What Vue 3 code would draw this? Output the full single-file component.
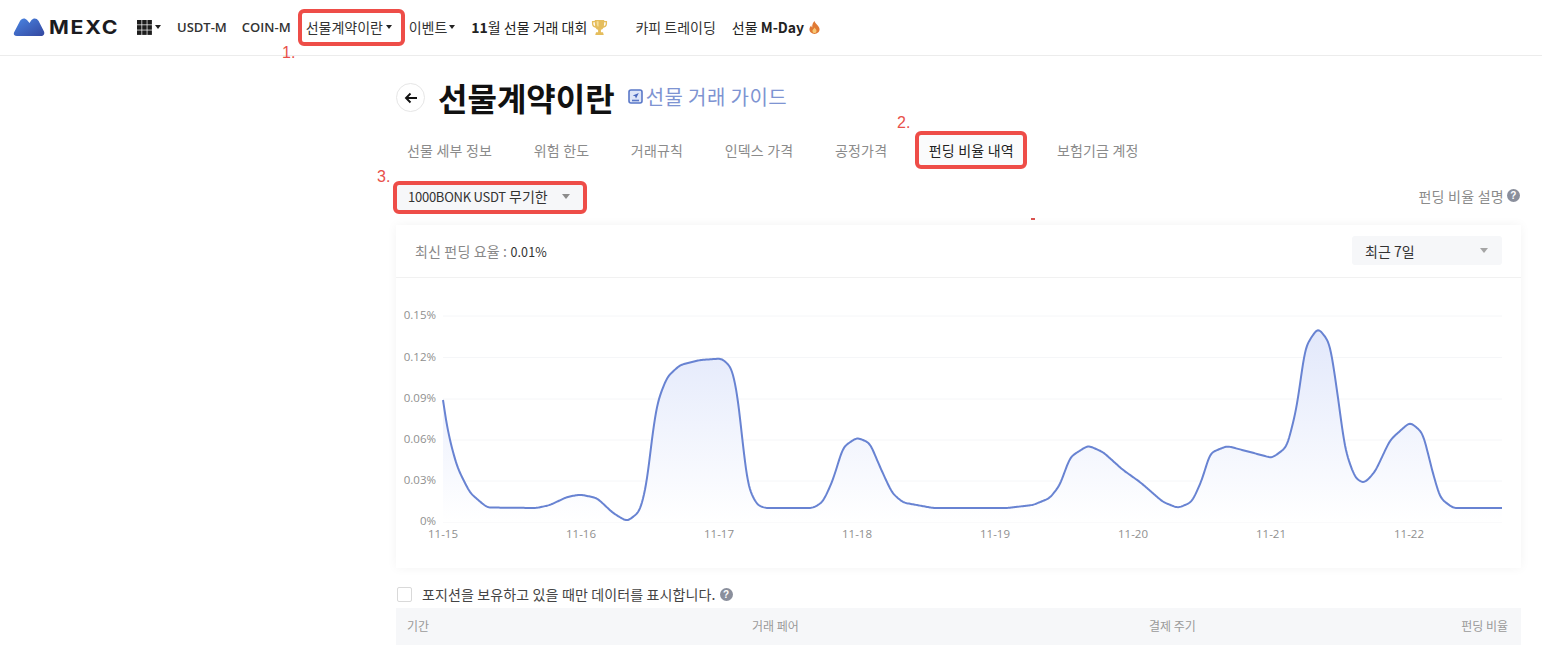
<template>
  <div class="page">
    <header class="topbar">
      <div class="logo">
        <svg class="logo-mark" viewBox="0 0 32 20" width="32" height="20">
          <defs>
            <linearGradient id="logoBlue" x1="0" y1="0" x2="1" y2="1">
              <stop offset="0" stop-color="#4a86e4" />
              <stop offset="1" stop-color="#34479f" />
            </linearGradient>
          </defs>
          <path fill="url(#logoBlue)" d="M1 15.500 7 4C8.500 1 12 .5 14 3L16.500 6 18.500 3C20.500 .5 24 1 25.500 3.800L31 14.500C32 17 30.500 19 28 19H4C1.500 19 .2 17.500 1 15.500Z" />
        </svg>
        <span class="logo-text">MEXC</span>
      </div>

      <div class="apps">
        <svg viewBox="0 0 15 15" width="15" height="15">
          <g fill="#1d1d1d">
            <template v-for="r in 3" :key="r">
              <rect v-for="c in 3" :key="c" :x="(c - 1) * 5.200" :y="(r - 1) * 5.200" width="4.500" height="4.500" />
            </template>
          </g>
        </svg>
        <i class="caret dark"></i>
      </div>

      <nav class="menu">
        <a class="menu-item latin">USDT-M</a>
        <a class="menu-item latin">COIN-M</a>
        <a class="menu-item boxed">선물계약이란<i class="caret dark"></i></a>
        <a class="menu-item after-box">이벤트<i class="caret dark"></i></a>
        <a class="menu-item contest"><b>11</b>월 선물 거래 대회
          <svg class="trophy" viewBox="0 0 18 18" width="17" height="17">
            <path fill="#e5bd5c" d="M4 1h10v1h3v3c0 2.400-1.500 3.900-3.800 4.200-.7 1.200-1.600 2-2.700 2.300V14h2.200l.8 3H4.500l.8-3h2.200v-2.500C6.400 11.200 5.500 10.400 4.800 9.200 2.500 8.900 1 7.400 1 5V2h3V1Zm-1.500 2.500V5c0 1.300.7 2.200 1.900 2.500C4.100 6.500 4 5.100 4 3.500H2.500Zm13 0H14c0 1.600-.1 3-.4 4 1.200-.3 1.900-1.200 1.900-2.500V3.500Z" />
            <path fill="#f6e09a" d="M6 2.500h2V8H7C6.300 7 6 5 6 2.500Z" />
          </svg>
        </a>
        <a class="menu-item copy">카피 트레이딩</a>
        <a class="menu-item contest">선물&nbsp;<b>M-Day</b>
          <svg class="flame" viewBox="0 0 12 14" width="11" height="13">
            <path fill="#e07a35" d="M6 0c.5 2.200 2 3 3.300 4.600C10.500 6 11.500 7.500 11.500 9c0 3-2.500 5-5.500 5S.5 12 .5 9c0-1.800.9-3.300 2-4.300 0 1.100.3 1.900 1 2.300C3.300 4.200 4.300 1.700 6 0Z" />
            <path fill="#f7c873" d="M6 7c.4 1.100 2.200 1.900 2.200 3.800C8.200 12.200 7.200 13 6 13s-2.200-.8-2.200-2.200C3.800 9.200 5.500 8.500 6 7Z" />
          </svg>
        </a>
        <span class="mark mark-one">1.</span>
      </nav>
    </header>

    <main class="content">
      <div class="title-row">
        <button class="back">
          <svg viewBox="0 0 14 14" width="14" height="14">
            <path d="M13 7H2M6.500 2.500 2 7l4.500 4.500" fill="none" stroke="#111" stroke-width="1.900" />
          </svg>
        </button>
        <h1 class="title">선물계약이란</h1>
        <a class="guide">
          <svg viewBox="0 0 15 15" width="15" height="15">
            <rect x="1" y="1" width="13" height="13" rx="2" fill="#dfe6f8" stroke="#5a78c8" stroke-width="1.600" />
            <path d="M4 11.500h7" stroke="#5a78c8" stroke-width="1.600" />
            <path d="M10.800 4 4.800 6.500l2.300.8.900 2.200 2.800-5.500Z" fill="#4a68bd" />
          </svg>
          선물 거래 가이드
        </a>
      </div>

      <div class="tabs">
        <a v-for="tab in tabs" :key="tab.label" class="tab" :class="{ active: tab.active }">{{ tab.label }}</a>
        <span class="mark mark-two">2.</span>
      </div>

      <div class="filter-row">
        <div class="symbol-select">
          <span><span class="pair">1000BONK USDT</span> 무기한</span>
          <i class="caret grey"></i>
        </div>
        <span class="mark mark-three">3.</span>
        <a class="explain">펀딩 비율 설명<span class="help">?</span></a>
        <i class="stray"></i>
      </div>

      <section class="card">
        <div class="card-head">
          <p class="latest">최신 펀딩 요율 : <b>0.01%</b></p>
          <div class="range-select">
            <span>최근 7일</span>
            <i class="caret grey small"></i>
          </div>
        </div>

        <svg class="chart" viewBox="396 278 1125 290" width="1125" height="290">
          <defs>
            <linearGradient id="areaFill" x1="0" y1="0" x2="0" y2="1">
              <stop offset="0" stop-color="#e2e8fb" />
              <stop offset="1" stop-color="#ffffff" />
            </linearGradient>
          </defs>
          <line v-for="g in grid" :key="g.label" x1="443" x2="1502" :y1="g.y" :y2="g.y" class="grid-line" />
          <text v-for="g in grid" :key="g.label + 't'" x="436" :y="g.y + 3" text-anchor="end" class="axis">{{ g.label }}</text>
          <text v-for="d in days" :key="d.label" :x="d.x" y="538" text-anchor="middle" class="axis">{{ d.label }}</text>
          <path :d="areaPath" fill="url(#areaFill)" />
          <path :d="linePath" fill="none" stroke="#6883d2" stroke-width="2" />
        </svg>
      </section>

      <label class="position-only">
        <span class="checkbox"></span>
        포지션을 보유하고 있을 때만 데이터를 표시합니다.
        <span class="help">?</span>
      </label>

      <div class="table-head">
        <span class="col-period">기간</span>
        <span class="col-pair">거래 페어</span>
        <span class="col-cycle">결제 주기</span>
        <span class="col-rate">펀딩 비율</span>
      </div>
    </main>
  </div>
</template>

<script setup>
import { computed } from 'vue'

const tabs = [
  { label: '선물 세부 정보' },
  { label: '위험 한도' },
  { label: '거래규칙' },
  { label: '인덱스 가격' },
  { label: '공정가격' },
  { label: '펀딩 비율 내역', active: true },
  { label: '보험기금 계정' },
]

const grid = [
  { label: '0.15%', y: 316 },
  { label: '0.12%', y: 357.5 },
  { label: '0.09%', y: 399 },
  { label: '0.06%', y: 440 },
  { label: '0.03%', y: 481 },
  { label: '0%', y: 522 },
]

const days = ['11-15', '11-16', '11-17', '11-18', '11-19', '11-20', '11-21', '11-22'].map((label, i) => ({
  label,
  x: 443 + i * 138,
}))

// traced from the funding history curve
const points = [
  [443, 400], [448, 433], [457, 467], [470, 493], [487, 507.5], [537, 508], [550, 505], [567, 497],
  [580, 494.5], [597, 498], [613, 513], [627, 521.5], [640, 511.5], [647, 483], [652, 437], [657, 403],
  [667, 377], [680, 365], [700, 360], [722, 358.5], [732, 368], [738, 397], [743, 447], [748, 487],
  [757, 505], [765, 508], [813, 508], [823, 502], [833, 480], [843, 447], [857, 437.5], [870, 443],
  [880, 467], [892, 493], [903, 502.5], [933, 508], [1007, 508], [1033, 505], [1050, 498], [1060, 485],
  [1070, 457], [1088, 445.5], [1103, 452], [1123, 470], [1140, 482], [1163, 502], [1178, 508], [1192, 502],
  [1202, 480], [1210, 453], [1227, 446], [1250, 452], [1272, 458], [1287, 447], [1297, 407], [1305, 347],
  [1318, 327.5], [1330, 343], [1337, 390], [1345, 450], [1355, 478], [1364, 483.5], [1375, 472], [1390, 440],
  [1410, 422], [1423, 433], [1432, 470], [1440, 498], [1453, 508], [1502, 508],
]

// sample every px, then a small gaussian so the traced corners round off
function sampleCurve() {
  const raw = []
  let seg = 0
  for (let x = points[0][0]; x <= points[points.length - 1][0]; x++) {
    while (x > points[seg + 1][0]) seg++
    const [x0, y0] = points[seg]
    const [x1, y1] = points[seg + 1]
    raw.push([x, y0 + ((y1 - y0) * (x - x0)) / (x1 - x0)])
  }
  const sigma = 2.6
  return raw.map(([x], i) => {
    const radius = Math.min(8, i, raw.length - 1 - i)
    let sum = 0
    let weight = 0
    for (let k = -radius; k <= radius; k++) {
      const w = Math.exp(-(k * k) / (2 * sigma * sigma))
      sum += raw[i + k][1] * w
      weight += w
    }
    return [x, sum / weight]
  })
}

const linePath = computed(() =>
  sampleCurve().map(([x, y], i) => `${i ? 'L' : 'M'}${x} ${y.toFixed(2)}`).join(''),
)

const areaPath = computed(() => `${linePath.value}L1502 522L443 522Z`)
</script>

<style>
body {
  background: #fff;
  overflow: hidden;
}
</style>

<style scoped>
.page {
  width: 1542px;
  height: 647px;
  overflow: hidden;
  font-family: "Noto Sans CJK KR", "Noto Sans", sans-serif;
  color: #333;
}

.topbar {
  display: flex;
  align-items: center;
  height: 54px;
  padding: 0 0 1px 13px;
  border-bottom: 1px solid #ececec;
}

.logo {
  display: flex;
  align-items: center;
  gap: 4px;
  width: 124px;
}

.logo-text {
  font-family: Inter, "Liberation Sans", sans-serif;
  font-size: 19px;
  font-weight: 700;
  letter-spacing: 1.6px;
  color: #1b1b1f;
  transform: scaleX(1.12);
  transform-origin: left center;
}

.apps {
  display: flex;
  align-items: center;
  gap: 3px;
  width: 40px;
}

.caret {
  display: inline-block;
  width: 0;
  height: 0;
  border-left: 3.5px solid transparent;
  border-right: 3.5px solid transparent;
  border-top: 4px solid #222;
}

.caret.grey {
  border-left-width: 4.5px;
  border-right-width: 4.5px;
  border-top: 5px solid #8c8c8c;
}

.caret.small {
  border-left-width: 4px;
  border-right-width: 4px;
  border-top-width: 5px;
  border-top-color: #a5a5a5;
}

.menu {
  position: relative;
  display: flex;
  align-items: center;
  font-size: 14px;
}

.menu-item {
  display: flex;
  align-items: center;
  white-space: nowrap;
  color: #333;
}

.menu-item.latin {
  font-family: "Open Sans", "Noto Sans", sans-serif;
  font-weight: 600;
  font-size: 13px;
  margin-right: 15px;
}

.menu-item.boxed {
  box-sizing: border-box;
  width: 107px;
  height: 37px;
  margin-left: -8px;
  padding-left: 4px;
  gap: 3px;
  border: 4px solid #ee4d48;
  border-radius: 6px;
}

.menu-item.after-box {
  margin-left: 4px;
  gap: 2px;
  margin-right: 16px;
}

.menu-item.contest {
  color: #222;
}

.menu-item.contest b {
  font-weight: 600;
}

.trophy {
  margin-left: 4px;
}

.flame {
  margin-left: 5px;
}

.menu-item.copy {
  margin-left: 27px;
  margin-right: 16px;
}

.mark {
  position: absolute;
  font-family: "Liberation Sans", sans-serif;
  font-size: 16px;
  color: #e8504a;
  white-space: nowrap;
}

.mark-one {
  left: 105px;
  top: 35px;
}

.mark-two {
  left: 501px;
  top: -17px;
}

.mark-three {
  left: -19px;
  top: -13px;
}

.content {
  position: relative;
  width: 1125px;
  margin-left: 396px;
}

.title-row {
  display: flex;
  align-items: center;
  height: 42px;
  margin-top: 20px;
}

.back {
  display: flex;
  align-items: center;
  justify-content: center;
  width: 29px;
  height: 29px;
  margin: 1px 13px 0 0;
  padding: 0;
  background: #fff;
  border: 1px solid #e6e6e6;
  border-radius: 50%;
}

.title {
  margin: 0;
  font-size: 32px;
  font-weight: 700;
  line-height: 42px;
  color: #111;
  white-space: nowrap;
}

.guide {
  display: flex;
  align-items: center;
  margin: 0 0 2px 13px;
  font-size: 20px;
  letter-spacing: .4px;
  color: #7e94d2;
  white-space: nowrap;
}

.guide svg {
  margin-right: 3px;
}

.tabs {
  position: relative;
  display: flex;
  align-items: center;
  height: 38px;
  margin-top: 13px;
  padding-left: 11px;
}

.tab {
  font-size: 14px;
  color: #8b8b8b;
  white-space: nowrap;
  margin-right: 41.5px;
  letter-spacing: .2px;
}

.tab.active {
  box-sizing: border-box;
  display: flex;
  align-items: center;
  height: 38px;
  margin: 0 30px 0 -14px;
  padding: 0 9px 0 10px;
  color: #222;
  background: #fafbfc;
  border: 4px solid #ee4d48;
  border-radius: 6px;
}

.filter-row {
  position: relative;
  display: flex;
  align-items: center;
  justify-content: space-between;
  height: 32px;
  margin-top: 12px;
}

.symbol-select {
  box-sizing: border-box;
  display: flex;
  align-items: center;
  justify-content: space-between;
  width: 194px;
  height: 33px;
  margin-left: -3px;
  padding: 0 13px 2px 11px;
  font-size: 14px;
  color: #333;
  background: #f6f7f9;
  border: 4px solid #ee4d48;
  border-radius: 6px;
  white-space: nowrap;
}

.pair {
  font-size: 13px;
  letter-spacing: -.25px;
}

.explain {
  display: flex;
  align-items: center;
  gap: 3px;
  margin: 0 1px 3px 0;
  font-size: 14px;
  letter-spacing: .25px;
  color: #8b8b8b;
}

.help {
  display: inline-flex;
  align-items: center;
  justify-content: center;
  width: 13px;
  height: 13px;
  font-family: "Liberation Sans", sans-serif;
  font-size: 10px;
  font-weight: 700;
  color: #fff;
  background: #8a8f9c;
  border-radius: 50%;
}

.stray {
  position: absolute;
  left: 635px;
  top: 37px;
  width: 4px;
  height: 2px;
  background: #d9534f;
}

.card {
  margin-top: 12px;
  background: #fff;
  box-shadow: 0 0 10px rgba(0, 0, 0, .05);
}

.card-head {
  display: flex;
  align-items: center;
  justify-content: space-between;
  height: 51px;
  padding: 0 19px 1px;
  border-bottom: 1px solid #f1f1f1;
}

.latest {
  margin: 0;
  font-size: 14px;
  letter-spacing: .15px;
  color: #888;
}

.latest b {
  font-size: 12.5px;
  font-weight: 400;
  color: #333;
}

.range-select {
  box-sizing: border-box;
  display: flex;
  align-items: center;
  justify-content: space-between;
  width: 150px;
  height: 29px;
  padding: 0 14px 0 13px;
  font-size: 14px;
  color: #333;
  background: #f6f7f9;
  border-radius: 3px;
}

.chart {
  display: block;
}

.grid-line {
  stroke: #f5f6f8;
  stroke-width: 1;
}

.axis {
  font-family: "Open Sans", "Noto Sans", sans-serif;
  font-size: 11.5px;
  fill: #8f8f8f;
}

.position-only {
  display: flex;
  align-items: center;
  height: 16px;
  margin-top: 18px;
  font-size: 14px;
  letter-spacing: .13px;
  color: #444;
}

.checkbox {
  box-sizing: border-box;
  width: 15px;
  height: 15px;
  margin: 0 10px 0 1px;
  background: #fff;
  border: 1px solid #d9d9d9;
  border-radius: 2px;
}

.position-only .help {
  margin-left: 4px;
}

.table-head {
  display: flex;
  align-items: center;
  box-sizing: border-box;
  height: 37px;
  margin-top: 6px;
  padding-bottom: 3px;
  font-size: 12px;
  color: #9a9a9a;
  background: #f6f7f9;
}

.col-period {
  margin-left: 11px;
  width: 345px;
}

.col-pair {
  width: 397px;
}

.col-cycle {
  flex: 1;
}

.col-rate {
  margin-right: 13px;
}
</style>
